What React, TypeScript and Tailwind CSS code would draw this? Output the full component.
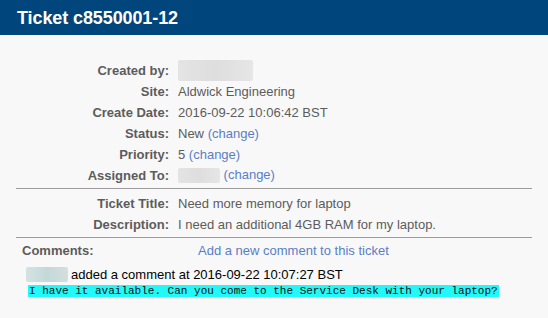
function Blur({ w, h, tint }: { w: string; h: string; tint?: boolean }) {
  return (
    <span
      className={`inline-block align-middle rounded-[2px] ${w} ${h} ${
        tint
          ? "bg-gradient-to-r from-[#d6e2e2] via-[#c4d8d8] to-[#d4dede]"
          : "bg-gradient-to-r from-[#e4e4e4] via-[#dedede] to-[#e6e6e6]"
      }`}
    />
  );
}

function Change() {
  return <span className="text-[#5a7ec6]"> (change)</span>;
}

function Row({ label, children }: { label: string; children: React.ReactNode }) {
  return (
    <div className="flex h-[21px] items-center">
      <div className="w-[153px] text-right font-bold text-[#5c5c5c]">{label}</div>
      <div className="pl-[9px] text-[#5c5c5c] whitespace-nowrap">{children}</div>
    </div>
  );
}

export default function App() {
  return (
    <div
      className="w-[548px] h-[318px] bg-[#f8f8f8] overflow-hidden text-[13px] leading-none"
      style={{ fontFamily: '"Liberation Sans", Arial, sans-serif' }}
    >
      {/* header */}
      <div className="h-[35px] bg-[#00467c] flex items-center pl-[17px]">
        <h1 className="text-white font-bold text-[18px] tracking-[-0.1px]">Ticket c8550001-12</h1>
      </div>

      <div className="px-4 pt-[25px]">
        {/* details */}
        <Row label="Created by:">
          <Blur w="w-[75px]" h="h-[21px]" />
        </Row>
        <Row label="Site:">Aldwick Engineering</Row>
        <Row label="Create Date:">2016-09-22 10:06:42 BST</Row>
        <Row label="Status:">
          New<Change />
        </Row>
        <Row label="Priority:">
          5<Change />
        </Row>
        <Row label="Assigned To:">
          <Blur w="w-[42px]" h="h-[15px]" />
          <Change />
        </Row>

        <div className="border-t border-[#9c9c9c] mt-[2px] mb-[4px]" />

        <Row label="Ticket Title:">Need more memory for laptop</Row>
        <Row label="Description:">I need an additional 4GB RAM for my laptop.</Row>

        <div className="border-t border-[#9c9c9c] mt-[2px]" />

        {/* comments */}
        <div className="flex items-center h-[24px] pl-[6px]">
          <div className="w-[176px] font-bold text-[#5c5c5c]">Comments:</div>
          <a className="text-[#5a7ec6]">Add a new comment to this ticket</a>
        </div>

        <div className="flex items-center h-[22px] pl-[10px] mt-[1px] text-black">
          <Blur w="w-[42px]" h="h-[15px]" tint />
          <span className="pl-[3px]">added a comment at 2016-09-22 10:07:27 BST</span>
        </div>

        <div className="pl-[12px] -mt-[2px]">
          <span
            className="inline-block bg-[#22f8f8] text-[#111] text-[11px] leading-[12px] px-[1px]"
            style={{ fontFamily: '"Liberation Mono", "Courier New", monospace' }}
          >
            I have it available. Can you come to the Service Desk with your laptop?
          </span>
        </div>
      </div>
    </div>
  );
}
